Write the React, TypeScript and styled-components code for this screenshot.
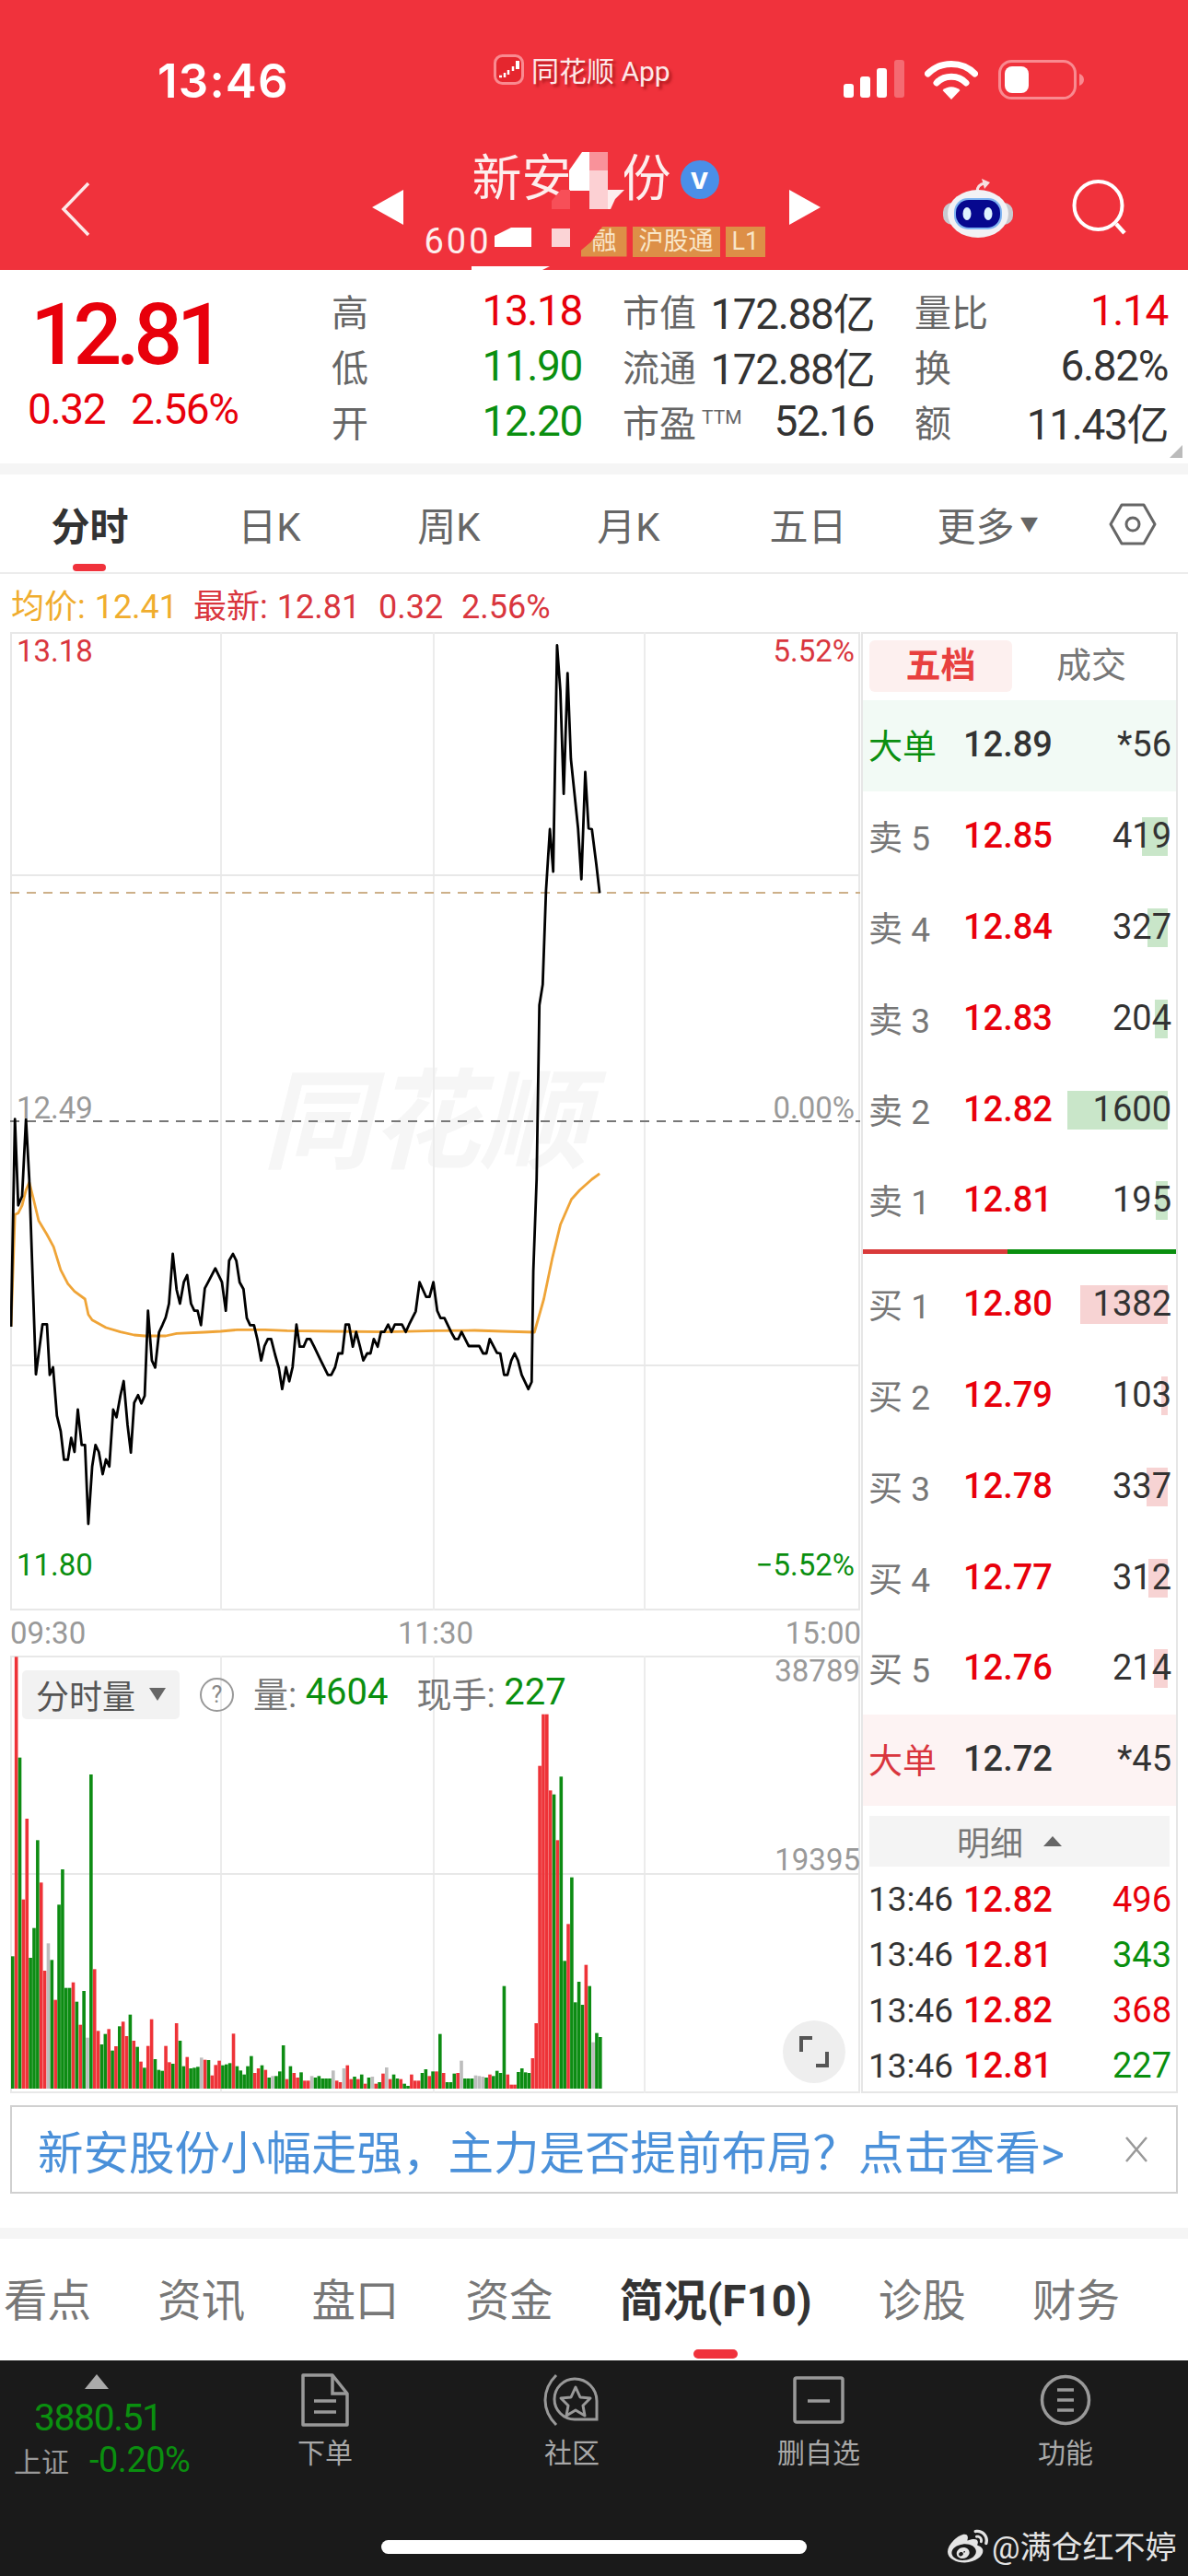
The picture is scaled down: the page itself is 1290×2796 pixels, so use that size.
import React from 'react'
import styled, { createGlobalStyle } from 'styled-components'
import { FaWeibo } from 'react-icons/fa'

const RED = '#e8000b'
const GREEN = '#0a8f0f'
const FONT = `Roboto, "Noto Sans CJK SC", sans-serif`

const GlobalStyle = createGlobalStyle`
  html, body { margin: 0; padding: 0; background: #fff; }
  body { font-family: ${FONT}; }
`

const Page = styled.div`
  width: 1290px;
  height: 2796px;
  overflow: hidden;
  display: flex;
  flex-direction: column;
  background: #fff;
`

/* ---------- red header ---------- */
const Header = styled.header`
  position: relative;
  height: 293px;
  flex: none;
  background: #f0323c;
  color: #fff;
`
const Mosaic = styled.svg`
  position: absolute;
  left: 0;
  top: 0;
  pointer-events: none;
`
const StatusBar = styled.div`
  height: 158px;
  box-sizing: border-box;
  padding: 52px 113px 0 171px;
  display: flex;
  align-items: flex-start;
`
const Clock = styled.div`
  width: 365px;
  font: 600 51px/72px Inter, sans-serif;
  letter-spacing: 1.2px;
`
const SourceApp = styled.div`
  display: flex;
  align-items: center;
  gap: 8px;
  margin-top: 3px;
  height: 40px;
  font-size: 30px;
  color: #fde8e8;
  text-shadow: 3px 3px 3px rgba(110, 0, 0, 0.5);
`
const StatusIcons = styled.div`
  margin-left: auto;
  display: flex;
  align-items: center;
  gap: 22px;
  height: 68px;
`
const NavBar = styled.div`
  display: grid;
  grid-template-columns: 404px 487px 1fr;
  height: 135px;
`
const BackSlot = styled.div`
  padding: 38px 0 0 64px;
`
const Switcher = styled.div`
  display: flex;
  justify-content: space-between;
`
const Arrow = styled.div<{ $dir: 'l' | 'r' }>`
  width: 0;
  height: 0;
  margin-top: 48px;
  border-top: 19px solid transparent;
  border-bottom: 19px solid transparent;
  ${({ $dir }) => ($dir === 'l' ? 'border-right: 34px solid #fff;' : 'border-left: 34px solid #fff;')}
`
const Stock = styled.div`
  width: 374px;
  display: flex;
  flex-direction: column;
`
const TitleRow = styled.div`
  display: flex;
  align-items: center;
  height: 72px;
  padding: 1px 0 0 52px;
  gap: 10px;
  font-size: 54px;
  line-height: 72px;
  color: #fdeeee;
`
const VBadge = styled.span`
  width: 42px;
  height: 42px;
  border-radius: 50%;
  background: #4a8fe8;
  color: #fff;
  font: 700 34px/38px "Liberation Sans", sans-serif;
  text-align: center;
`
const CodeRow = styled.div`
  display: flex;
  align-items: center;
  margin-top: 13px;
  height: 36px;
`
const Code = styled.span`
  width: 170px;
  font-size: 38px;
  line-height: 36px;
  letter-spacing: 3px;
  color: #fdeeee;
`
const Tags = styled.div`
  display: flex;
  gap: 6px;
`
const Tag = styled.span<{ $notched?: boolean }>`
  height: 33px;
  padding: 0 ${({ $notched }) => ($notched ? '11px 0 12px' : '7px')};
  background: #dd8f47;
  color: #f9e6c8;
  font-size: 27px;
  line-height: 32px;
  ${({ $notched }) => $notched && 'clip-path: polygon(48% 0, 100% 0, 100% 100%, 0 100%, 0 80%, 22% 52%);'}
`
const NavTools = styled.div`
  display: flex;
  padding: 34px 0 0 133px;
  gap: 62px;
  align-items: flex-start;
`

/* ---------- quote ---------- */
const Quote = styled.section`
  position: relative;
  height: 210px;
  flex: none;
  display: flex;
  box-sizing: border-box;
  padding-top: 14px;
`
const PriceBox = styled.div`
  width: 360px;
  flex: none;
  padding-left: 30px;
  box-sizing: border-box;
`
const BigPrice = styled.div`
  margin: 9px 0 0 3px;
  font: 500 93px/96px Roboto, sans-serif;
  letter-spacing: -6.4px;
  color: ${RED};
`
const Change = styled.div`
  margin-top: 8px;
  display: flex;
  gap: 28px;
  font-size: 46px;
  line-height: 48px;
  letter-spacing: -1.4px;
  color: ${RED};
`
const Stats = styled.div`
  display: grid;
  grid-template-columns: 272px 273px 275px;
  grid-auto-rows: 60px;
  column-gap: 44px;
`
const Stat = styled.div`
  display: flex;
  justify-content: space-between;
  align-items: center;
`
const StatLabel = styled.span`
  font-size: 40px;
  color: #666;
  & sup {
    font-size: 21px;
    vertical-align: 14px;
    line-height: 0;
    margin-left: 6px;
  }
`
const StatValue = styled.span<{ $c?: string }>`
  font-size: 46px;
  letter-spacing: -1.4px;
  color: ${({ $c }) => $c || '#333'};
`
const CornerMark = styled.div`
  position: absolute;
  right: 6px;
  bottom: 6px;
  width: 0;
  height: 0;
  border-left: 14px solid transparent;
  border-bottom: 14px solid #bbb;
`
const Band = styled.div<{ $h: number }>`
  height: ${({ $h }) => $h}px;
  flex: none;
  background: #f5f5f5;
`

/* ---------- period tabs ---------- */
const PeriodTabs = styled.nav`
  display: grid;
  grid-template-columns: repeat(6, 195px) 120px;
  height: 108px;
  flex: none;
  border-bottom: 2px solid #ececec;
  box-sizing: border-box;
`
const PeriodTab = styled.div<{ $on?: boolean }>`
  position: relative;
  display: flex;
  align-items: center;
  justify-content: center;
  padding-top: 1px;
  font-size: 42px;
  font-weight: ${({ $on }) => ($on ? 700 : 400)};
  color: ${({ $on }) => ($on ? '#333' : '#666')};
  ${({ $on }) =>
    $on &&
    `&::after {
      content: '';
      position: absolute;
      left: 79px;
      bottom: 1px;
      width: 36px;
      height: 8px;
      border-radius: 4px;
      background: #f0323c;
    }`}
`
const Caret = styled.span`
  margin-left: 6px;
  font-size: 20px;
  color: #666;
`

const InfoLine = styled.div`
  height: 63px;
  flex: none;
  padding-left: 12px;
  display: flex;
  align-items: center;
  font-size: 36px;
  word-spacing: 1px;
  white-space: pre;
`
const InfoPart = styled.span<{ $c: string }>`
  color: ${({ $c }) => $c};
  margin-right: 17px;
`

/* ---------- market ---------- */
const Market = styled.section`
  display: flex;
  height: 1586px;
  flex: none;
`
const ChartColumn = styled.div`
  width: 935px;
  flex: none;
  box-sizing: border-box;
  padding-left: 11px;
`
const Plot = styled.div<{ $h: number }>`
  position: relative;
  width: 923px;
  height: ${({ $h }) => $h}px;
`
const PlotSvg = styled.svg`
  display: block;
  position: absolute;
  left: 0;
  top: 0;
`
const AxisLabel = styled.span<{ $c: string; $side: 'l' | 'r'; $top: number; $edge?: number }>`
  position: absolute;
  ${({ $side, $edge }) => ($side === 'l' ? 'left: 7px;' : `right: ${$edge ?? 6}px;`)}
  top: ${({ $top }) => $top}px;
  font-size: 33px;
  line-height: 40px;
  color: ${({ $c }) => $c};
`
const Watermark = styled.span`
  position: absolute;
  left: 274px;
  top: 452px;
  font: italic 700 118px/140px "Noto Sans CJK SC", sans-serif;
  color: #f6f6f6;
`
const TimeAxis = styled.div`
  height: 49px;
  display: flex;
  justify-content: space-between;
  align-items: center;
  font-size: 33px;
  color: #999;
  padding-right: 0;
`
const VolumeHead = styled.div`
  position: absolute;
  left: 13px;
  top: 12px;
  display: flex;
  align-items: center;
  font-size: 38px;
`
const VolumeSelect = styled.div`
  width: 171px;
  height: 53px;
  box-sizing: border-box;
  padding-left: 15px;
  display: flex;
  align-items: center;
  gap: 15px;
  background: #f2f2f2;
  border-radius: 5px;
  font-size: 36px;
  color: #555;
`
const SmallCaret = styled.span`
  width: 0;
  height: 0;
  border-left: 9px solid transparent;
  border-right: 9px solid transparent;
  border-top: 14px solid #666;
`
const Help = styled.span`
  width: 33px;
  height: 33px;
  margin: 0 21px 0 22px;
  border: 2px solid #999;
  border-radius: 50%;
  text-align: center;
  font-size: 25px;
  line-height: 33px;
  color: #888;
`
const HeadLabel = styled.span`
  margin-bottom: 5px;
  color: #777;
  white-space: pre;
`
const HeadValue = styled.span`
  margin: 0 31px 5px 0;
  font-size: 40px;
  color: ${GREEN};
`
const Expand = styled.div`
  position: absolute;
  left: 839px;
  top: 396px;
  width: 68px;
  height: 68px;
  border-radius: 50%;
  background: #eeeeee;
  display: flex;
  align-items: center;
  justify-content: center;
`

/* ---------- order book ---------- */
const Book = styled.aside`
  width: 344px;
  flex: none;
  box-sizing: border-box;
  border: 2px solid #e6e6e6;
  display: flex;
  flex-direction: column;
`
const BookTabs = styled.div`
  height: 72px;
  flex: none;
  display: flex;
  padding: 7px 0 0 7px;
  box-sizing: border-box;
`
const BookTab = styled.div<{ $on?: boolean }>`
  width: 155px;
  height: 56px;
  border-radius: 6px;
  text-align: center;
  font-size: 38px;
  line-height: 54px;
  font-weight: ${({ $on }) => ($on ? 700 : 400)};
  color: ${({ $on }) => ($on ? '#e8403f' : '#777')};
  background: ${({ $on }) => ($on ? '#fdf0ef' : 'transparent')};
  & + & {
    width: 172px;
  }
`
const BookRow = styled.div<{ $bg?: string }>`
  height: 98.8px;
  flex: none;
  display: flex;
  align-items: center;
  padding: 0 5px 2px 6px;
  box-sizing: border-box;
  background: ${({ $bg }) => $bg || 'transparent'};
`
const RowLabel = styled.span<{ $c?: string }>`
  width: 103px;
  flex: none;
  font-size: 37px;
  color: ${({ $c }) => $c || '#777'};
  white-space: pre;
`
const RowPrice = styled.span<{ $c?: string }>`
  font-size: 38px;
  font-weight: 500;
  color: ${({ $c }) => $c || RED};
`
const RowQty = styled.span<{ $c?: string }>`
  position: relative;
  margin-left: auto;
  font-size: 38px;
  color: ${({ $c }) => $c || '#333'};
`
const DepthBar = styled.i<{ $buy?: boolean }>`
  position: absolute;
  right: 4px;
  top: 2px;
  height: 42px;
  background: ${({ $buy }) => ($buy ? '#f7d3d3' : '#c9e6c9')};
  z-index: 0;
`
const QtyText = styled.span`
  position: relative;
  z-index: 1;
`
const Split = styled.div`
  height: 5px;
  flex: none;
  margin: 3px 0 6px;
  display: flex;
  &::before {
    content: '';
    width: 157px;
    background: #d93a3a;
  }
  &::after {
    content: '';
    flex: 1;
    background: ${GREEN};
  }
`
const DetailHead = styled.div`
  height: 55px;
  flex: none;
  margin: 11px 7px 6px;
  background: #f4f4f4;
  display: flex;
  align-items: center;
  justify-content: center;
  gap: 22px;
  padding-right: 22px;
  font-size: 36px;
  color: #777;
`
const UpCaret = styled.span`
  width: 0;
  height: 0;
  border-left: 10px solid transparent;
  border-right: 10px solid transparent;
  border-bottom: 11px solid #666;
`
const TradeRow = styled.div`
  height: 60.2px;
  flex: none;
  display: flex;
  align-items: center;
  padding: 0 5px 0 6px;
`
const TradeTime = styled.span`
  width: 103px;
  flex: none;
  font-size: 37px;
  color: #333;
`

/* ---------- banner ---------- */
const Banner = styled.div`
  margin: 13px 11px 37px;
  height: 96px;
  flex: none;
  box-sizing: border-box;
  border: 2px solid #d0d0d0;
  display: flex;
  align-items: center;
  padding: 0 30px 0 28px;
  font-size: 49.5px;
  color: #4a90d9;
  white-space: nowrap;
`
const BannerClose = styled.svg`
  margin-left: auto;
`

/* ---------- section tabs ---------- */
const SectionTabs = styled.nav`
  height: 132px;
  flex: none;
  display: flex;
  align-items: center;
  gap: 72.2px;
  padding: 0 0 0 4px;
`
const SectionTab = styled.div<{ $on?: boolean }>`
  position: relative;
  margin-top: -6px;
  font-size: 47.5px;
  white-space: nowrap;
  font-weight: ${({ $on }) => ($on ? 700 : 400)};
  color: ${({ $on }) => ($on ? '#333' : '#777')};
  ${({ $on }) =>
    $on &&
    `&::after {
      content: '';
      position: absolute;
      left: 50%;
      bottom: -32px;
      width: 48px;
      height: 10px;
      margin-left: -24px;
      border-radius: 5px;
      background: #f0323c;
    }`}
`

/* ---------- bottom bar ---------- */
const BottomBar = styled.footer`
  position: relative;
  flex: 1;
  background: #1a1a1a;
  display: grid;
  grid-template-columns: 219px repeat(4, 268px);
  align-items: start;
`
const IndexBox = styled.div`
  position: relative;
  padding-left: 15px;
  padding-top: 15px;
`
const IndexUp = styled.div`
  width: 0;
  height: 0;
  margin-left: 77px;
  border-left: 13px solid transparent;
  border-right: 13px solid transparent;
  border-bottom: 16px solid #aaa;
`
const IndexValue = styled.div`
  margin: 7px 0 0 22px;
  font-size: 41px;
  line-height: 48px;
  letter-spacing: -1.5px;
  color: ${GREEN};
`
const IndexLine = styled.div`
  margin-top: 0;
  display: flex;
  align-items: center;
  gap: 22px;
  font-size: 30px;
  color: #999;
`
const IndexPct = styled.span`
  font-size: 38px;
  letter-spacing: -0.5px;
  color: ${GREEN};
`
const ToolItem = styled.div`
  display: flex;
  flex-direction: column;
  align-items: center;
  gap: 7px;
  padding-top: 14px;
  font-size: 30px;
  line-height: 44px;
  color: #a8a8a8;
`
const HomeBar = styled.div`
  position: absolute;
  left: 414px;
  top: 195px;
  width: 462px;
  height: 15px;
  border-radius: 8px;
  background: #fff;
`
const Credit = styled.div`
  position: absolute;
  left: 1029px;
  top: 168px;
  display: flex;
  align-items: center;
  gap: 4px;
  font-size: 34px;
  line-height: 70px;
  color: #e4e4e4;
  white-space: nowrap;
`

/* ---------- data ---------- */
const X = 1.668
const z3 = (p: number[][]) => p.map(([x, y]) => [x / X, 1280 + y / 3])
const z2 = (p: number[][]) => p.map(([x, y]) => [x / X, 640 + y / 2.45])
const toPts = (p: number[][]) => p.map(([x, y]) => `${x.toFixed(1)},${y.toFixed(1)}`).join(' ')

const pricePts = [
  ...z3([[20, 480]]),
  ...z2([[27, 1408]]),
  ...z3([[33, 85], [40, 55]]),
  ...z2([[47, 1408]]),
  ...z3([
    [53, 0], [65, 635], [77, 472], [85, 472], [90, 637], [96, 612], [103, 770], [110, 820], [116, 913], [123, 913],
    [129, 842], [135, 888], [141, 750], [148, 865], [154, 865], [160, 1122], [167, 935], [173, 865], [179, 888],
    [186, 960], [192, 912], [198, 935], [205, 750], [211, 775], [218, 705], [224, 657], [231, 800], [237, 890],
    [243, 728], [250, 703], [256, 730], [262, 705], [268, 428], [275, 590], [281, 613], [288, 498], [294, 475],
    [300, 450], [306, 405], [313, 243], [320, 360], [326, 405], [333, 335], [339, 312], [346, 405], [352, 428],
    [358, 428], [364, 475], [371, 355], [377, 335], [390, 290], [402, 335], [409, 428], [415, 265], [422, 243],
    [428, 265], [434, 335], [441, 358], [447, 452], [453, 475], [460, 475], [466, 520], [473, 590], [479, 543],
    [485, 520], [491, 520], [498, 570], [505, 615], [511, 683], [518, 612], [524, 658], [530, 612], [537, 473],
    [543, 545], [550, 545], [556, 520], [562, 520], [569, 545], [581, 590], [594, 637], [600, 637], [607, 612],
    [613, 567], [620, 567], [626, 473], [632, 473], [639, 545], [645, 497], [652, 545], [658, 590], [665, 567],
    [671, 567], [677, 520], [684, 545], [690, 497], [696, 497], [703, 473], [709, 497], [715, 473], [728, 473],
    [735, 497], [741, 473], [753, 430], [760, 335], [772, 383], [778, 383], [785, 335], [792, 428], [798, 452],
    [805, 452], [817, 497], [824, 520], [830, 520], [836, 497], [849, 543], [868, 543], [875, 567], [881, 567],
    [887, 520], [900, 565], [906, 567], [913, 637], [919, 637], [926, 590], [932, 567], [938, 590], [945, 637],
    [957, 683], [963, 660], [966, 300],
  ]),
  ...z2([
    [972, 1568], [977, 1105], [983, 1050], [989, 800], [996, 637], [1002, 750], [1009, 148], [1015, 270], [1021, 543],
    [1028, 222], [1034, 450], [1047, 635], [1053, 770], [1060, 485], [1066, 635], [1072, 637], [1080, 730], [1086, 807],
  ]),
]

const avgPts = [
  ...z3([
    [20, 480], [27, 115], [33, 110], [40, 85], [47, 35], [53, 10], [60, 60], [70, 135], [85, 180], [97, 220],
    [110, 295], [123, 340], [135, 365], [154, 390], [160, 440], [167, 458], [192, 483], [218, 497], [243, 507],
    [262, 510], [300, 510], [320, 502], [370, 498], [400, 495], [430, 490], [480, 490], [520, 493], [600, 495],
    [700, 497], [790, 493], [860, 492], [910, 495], [968, 498], [985, 390], [1000, 260], [1015, 148], [1035, 65],
    [1050, 35], [1072, 0],
  ]),
  ...z2([[1086, 1553]]),
]

const volumeData =
  'g1030 r55 g383 r845 r582 g1035 g938 g652 r790 r1077 a988 g1042 r1172 g862 g747 g1133 g1133 r1115 g1178 r1253 g1143 a1295 g438 r1072 r1273 g1317 g1283 r1267 g1337 r1323 g1258 r1243 r1290 g1220 r1305 g1325 r1373 g1393 r1322 r1235 g1365 g1400 g1403 r1322 r1375 g1380 r1248 g1305 g1388 r1358 g1395 g1393 g1390 a1360 r1367 g1368 r1418 r1384 r1370 g1385 g1382 g1378 r1282 g1388 g1402 g1415 g1388 g1355 r1410 r1395 g1385 r1400 g1425 a1420 g1420 g1405 g1320 r1430 g1388 r1410 r1425 g1408 r1435 r1435 a1420 g1425 g1420 g1428 g1428 g1428 a1402 r1435 r1440 a1395 r1385 r1430 g1422 r1430 g1415 r1445 g1425 a1422 r1445 g1440 r1412 a1392 r1430 g1415 g1428 r1430 g1445 g1452 r1415 r1435 r1435 g1410 g1398 r1420 g1405 r1405 g1283 r1410 g1440 g1440 g1412 r1410 a1370 g1428 g1428 g1428 a1418 a1420 a1422 g1425 r1415 g1420 g1403 g1410 g1127 r1415 r1448 r1448 g1407 g1395 g1408 g1410 r1362 r1248 r410 r242 r242 r490 g503 r652 g445 g1045 r925 g773 g1180 g1113 g1188 r1058 g1127 a1310 g1280 g1293'
    .split(' ')
    .map((v) => ({ c: v[0], top: 1780 + Number(v.slice(1)) / 3 }))
const barColor: Record<string, string> = { r: '#ee3338', g: '#0d8c13', a: '#bdbdbd' }

const sells = [
  { n: '5', p: '12.85', q: '419', w: 28 },
  { n: '4', p: '12.84', q: '327', w: 22 },
  { n: '3', p: '12.83', q: '204', w: 14 },
  { n: '2', p: '12.82', q: '1600', w: 109 },
  { n: '1', p: '12.81', q: '195', w: 13 },
]
const buys = [
  { n: '1', p: '12.80', q: '1382', w: 95 },
  { n: '2', p: '12.79', q: '103', w: 7 },
  { n: '3', p: '12.78', q: '337', w: 23 },
  { n: '4', p: '12.77', q: '312', w: 21 },
  { n: '5', p: '12.76', q: '214', w: 15 },
]
const trades = [
  { p: '12.82', q: '496', c: RED },
  { p: '12.81', q: '343', c: GREEN },
  { p: '12.82', q: '368', c: RED },
  { p: '12.81', q: '227', c: GREEN },
]
const stats: { label: React.ReactNode; value: string; c?: string }[] = [
  { label: '高', value: '13.18', c: RED },
  { label: '市值', value: '172.88亿' },
  { label: '量比', value: '1.14', c: RED },
  { label: '低', value: '11.90', c: GREEN },
  { label: '流通', value: '172.88亿' },
  { label: '换', value: '6.82%' },
  { label: '开', value: '12.20', c: GREEN },
  { label: <>市盈<sup>TTM</sup></>, value: '52.16' },
  { label: '额', value: '11.43亿' },
]

function PriceChart() {
  return (
    <PlotSvg width={923} height={1062} viewBox="11 686 923 1062">
      <rect x={12} y={687} width={921} height={1060} fill="none" stroke="#e8e8e8" strokeWidth={2} />
      {[240, 471, 700].map((x) => (
        <line key={x} x1={x} x2={x} y1={686} y2={1748} stroke="#ececec" strokeWidth={2} />
      ))}
      {[950, 1482].map((y) => (
        <line key={y} x1={11} x2={934} y1={y} y2={y} stroke="#e8e8e8" strokeWidth={2} />
      ))}
      <line x1={11} x2={934} y1={969} y2={969} stroke="#cdb089" strokeWidth={2} strokeDasharray="10 8" />
      <line x1={11} x2={934} y1={1217} y2={1217} stroke="#777" strokeWidth={2} strokeDasharray="10 8" />
      <polyline points={toPts(avgPts)} fill="none" stroke="#efa437" strokeWidth={2.8} strokeLinejoin="round" />
      <polyline points={toPts(pricePts)} fill="none" stroke="#000" strokeWidth={2.8} strokeLinejoin="round" />
    </PlotSvg>
  )
}

function VolumeChart() {
  return (
    <PlotSvg width={923} height={475} viewBox="11 1797 923 475">
      <rect x={12} y={1798} width={921} height={473} fill="none" stroke="#e8e8e8" strokeWidth={2} />
      {[240, 471, 700].map((x) => (
        <line key={x} x1={x} x2={x} y1={1797} y2={2272} stroke="#ececec" strokeWidth={2} />
      ))}
      <line x1={11} x2={934} y1={2034} y2={2034} stroke="#e8e8e8" strokeWidth={2} />
      {volumeData.map((b, i) => (
        <rect
          key={i}
          x={(23 + 6.45 * i) / X - 1.8}
          y={b.top}
          width={3.6}
          height={2267 - b.top}
          fill={barColor[b.c]}
        />
      ))}
    </PlotSvg>
  )
}

function BookLine({ label, n, p, q, w, buy }: { label: string; n: string; p: string; q: string; w: number; buy?: boolean }) {
  return (
    <BookRow>
      <RowLabel>{`${label} ${n}`}</RowLabel>
      <RowPrice>{p}</RowPrice>
      <RowQty>
        <DepthBar $buy={buy} style={{ width: w }} />
        <QtyText>{q}</QtyText>
      </RowQty>
    </BookRow>
  )
}

export default function App() {
  return (
    <Page>
      <GlobalStyle />
      <Header>
        <StatusBar>
          <Clock>13:46</Clock>
          <SourceApp>
            <svg width="33" height="33" viewBox="0 0 33 33">
              <rect x="1.5" y="1.5" width="30" height="30" rx="8" fill="#e5262e" stroke="#f98a90" strokeWidth="3" />
              <path d="M6 24h3M12 20v5M16 17v5M21 13v5" stroke="#fff" strokeWidth="2.5" />
              <rect x="24" y="7" width="4" height="9" fill="#fff" />
            </svg>
            同花顺 App
          </SourceApp>
          <StatusIcons>
            <svg width="66" height="42" viewBox="0 0 66 42">
              <rect x="0" y="26" width="11" height="15" rx="3" fill="#fff" />
              <rect x="18" y="18" width="11" height="23" rx="3" fill="#fff" />
              <rect x="36" y="9" width="11" height="32" rx="3" fill="#fff" />
              <rect x="55" y="0" width="11" height="41" rx="3" fill="#fff" fillOpacity="0.28" />
            </svg>
            <svg width="58" height="43" viewBox="0 0 58 43">
              <path d="M3.5 15C17 1 41 1 54.5 15" fill="none" stroke="#fff" strokeWidth="7" strokeLinecap="round" />
              <path d="M13 25C21 16 37 16 45 25" fill="none" stroke="#fff" strokeWidth="7" strokeLinecap="round" />
              <path d="M29 43L19.5 33C25 28 33 28 38.5 33Z" fill="#fff" />
            </svg>
            <svg width="93" height="43" viewBox="0 0 93 43">
              <rect x="1.5" y="1.5" width="82" height="40" rx="13" fill="none" stroke="#f98a90" strokeWidth="3" />
              <rect x="7" y="7" width="26" height="29" rx="8" fill="#fff" />
              <path d="M88 15c3 1 5 3.500 5 6.500s-2 5.500-5 6.500z" fill="#f98a90" />
            </svg>
          </StatusIcons>
        </StatusBar>
        <NavBar>
          <BackSlot>
            <svg width="36" height="62" viewBox="0 0 36 62">
              <path d="M32 3L5 31l27 28" fill="none" stroke="#fde8e8" strokeWidth="3.5" />
            </svg>
          </BackSlot>
          <Switcher>
            <Arrow $dir="l" />
            <Stock>
              <TitleRow>
                新安股份
                <VBadge>v</VBadge>
              </TitleRow>
              <CodeRow>
                <Code>600</Code>
                <Tags>
                  <Tag $notched>融</Tag>
                  <Tag>沪股通</Tag>
                  <Tag>L1</Tag>
                </Tags>
              </CodeRow>
            </Stock>
            <Arrow $dir="r" />
          </Switcher>
          <NavTools>
            <svg width="76" height="68" viewBox="0 0 76 68">
              <path d="M37 16c0-5 3-8 8-9" fill="none" stroke="#f6dfe0" strokeWidth="3" />
              <path d="M42 2l9 4-6 7z" fill="#f6dfe0" />
              <rect x="0" y="28" width="76" height="24" rx="10" fill="#c9c9cf" />
              <ellipse cx="38" cy="40" rx="33" ry="26" fill="#f2f2f5" />
              <rect x="12" y="23" width="52" height="34" rx="15" fill="#7fb4f2" />
              <rect x="14" y="25" width="48" height="30" rx="14" fill="#06088f" />
              <ellipse cx="26" cy="40" rx="4.500" ry="7" fill="#dff3ff" />
              <ellipse cx="49" cy="40" rx="4.500" ry="7" fill="#dff3ff" />
            </svg>
            <svg width="62" height="64" viewBox="0 0 62 64">
              <circle cx="30.500" cy="31" r="26" fill="none" stroke="#fff" strokeWidth="4" />
              <path d="M50 51l9 10" stroke="#fff" strokeWidth="4.500" />
            </svg>
          </NavTools>
        </NavBar>
        <Mosaic width={1290} height={293} viewBox="0 0 1290 293">
          <rect x="618" y="165" width="60" height="63" fill="#f0323c" />
          <path d="M632 165h8v42h-22v-22z" fill="#fff" />
          <rect x="640" y="165" width="20" height="20" fill="#f9929a" />
          <rect x="640" y="185" width="20" height="42" fill="#fcd0d3" />
          <path d="M660 206h18l-10 10-5 11h-3z" fill="#fdeeee" />
          <path d="M599 218l10-12h10v21h-20z" fill="#f74f58" />
          <path d="M537 256l18-9h22v21h-40z" fill="#fff" />
          <rect x="599" y="248" width="20" height="20" fill="#fbd4d6" />
          <path d="M512 289h85l-8 4h-77z" fill="#fff" />
        </Mosaic>
      </Header>

      <Quote>
        <PriceBox>
          <BigPrice>12.81</BigPrice>
          <Change>
            <span>0.32</span>
            <span>2.56%</span>
          </Change>
        </PriceBox>
        <Stats>
          {stats.map((s, i) => (
            <Stat key={i}>
              <StatLabel>{s.label}</StatLabel>
              <StatValue $c={s.c}>{s.value}</StatValue>
            </Stat>
          ))}
        </Stats>
        <CornerMark />
      </Quote>
      <Band $h={12} />

      <PeriodTabs>
        <PeriodTab $on>分时</PeriodTab>
        <PeriodTab>日K</PeriodTab>
        <PeriodTab>周K</PeriodTab>
        <PeriodTab>月K</PeriodTab>
        <PeriodTab>五日</PeriodTab>
        <PeriodTab>
          更多<Caret>▼</Caret>
        </PeriodTab>
        <PeriodTab>
          <svg width="52" height="46" viewBox="0 0 52 46">
            <path d="M14 2h24l12 21-12 21H14L2 23z" fill="none" stroke="#666" strokeWidth="3" strokeLinejoin="round" />
            <circle cx="26" cy="23" r="7" fill="none" stroke="#666" strokeWidth="3" />
          </svg>
        </PeriodTab>
      </PeriodTabs>

      <InfoLine>
        <InfoPart $c="#f0ad2e">均价: 12.41</InfoPart>
        <InfoPart $c="#d9363e">最新: 12.81  0.32  2.56%</InfoPart>
      </InfoLine>

      <Market>
        <ChartColumn>
          <Plot $h={1062}>
            <Watermark>同花顺</Watermark>
            <PriceChart />
            <AxisLabel $c="#d9363e" $side="l" $top={1}>13.18</AxisLabel>
            <AxisLabel $c="#d9363e" $side="r" $top={1}>5.52%</AxisLabel>
            <AxisLabel $c="#999" $side="l" $top={497}>12.49</AxisLabel>
            <AxisLabel $c="#999" $side="r" $top={497}>0.00%</AxisLabel>
            <AxisLabel $c={GREEN} $side="l" $top={993}>11.80</AxisLabel>
            <AxisLabel $c={GREEN} $side="r" $top={993}>−5.52%</AxisLabel>
          </Plot>
          <TimeAxis>
            <span>09:30</span>
            <span>11:30</span>
            <span>15:00</span>
          </TimeAxis>
          <Plot $h={475}>
            <VolumeChart />
            <VolumeHead>
              <VolumeSelect>
                分时量
                <SmallCaret />
              </VolumeSelect>
              <Help>?</Help>
              <HeadLabel>量: </HeadLabel>
              <HeadValue>4604</HeadValue>
              <HeadLabel>现手: </HeadLabel>
              <HeadValue>227</HeadValue>
            </VolumeHead>
            <AxisLabel $c="#999" $side="r" $edge={0} $top={-3}>38789</AxisLabel>
            <AxisLabel $c="#999" $side="r" $edge={0} $top={202}>19395</AxisLabel>
            <Expand>
              <svg width="34" height="36" viewBox="0 0 34 36">
                <path d="M15 3H3v15M19 33h12V18" fill="none" stroke="#555" strokeWidth="4" />
              </svg>
            </Expand>
          </Plot>
        </ChartColumn>

        <Book>
          <BookTabs>
            <BookTab $on>五档</BookTab>
            <BookTab>成交</BookTab>
          </BookTabs>
          <BookRow $bg="#f2faf5">
            <RowLabel $c={GREEN}>大单</RowLabel>
            <RowPrice $c="#333">12.89</RowPrice>
            <RowQty>*56</RowQty>
          </BookRow>
          {sells.map((r) => (
            <BookLine key={r.n} label="卖" {...r} />
          ))}
          <Split />
          {buys.map((r) => (
            <BookLine key={r.n} label="买" buy {...r} />
          ))}
          <BookRow $bg="#fdf3f3">
            <RowLabel $c="#d9363e">大单</RowLabel>
            <RowPrice $c="#333">12.72</RowPrice>
            <RowQty>*45</RowQty>
          </BookRow>
          <DetailHead>
            明细
            <UpCaret />
          </DetailHead>
          {trades.map((t, i) => (
            <TradeRow key={i}>
              <TradeTime>13:46</TradeTime>
              <RowPrice>{t.p}</RowPrice>
              <RowQty $c={t.c}>{t.q}</RowQty>
            </TradeRow>
          ))}
        </Book>
      </Market>

      <Banner>
        新安股份小幅走强，主力是否提前布局？点击查看&gt;
        <BannerClose width="26" height="30" viewBox="0 0 26 30">
          <path d="M2 2l22 26M24 2L2 28" stroke="#999" strokeWidth="2.5" />
        </BannerClose>
      </Banner>
      <Band $h={12} />

      <SectionTabs>
        <SectionTab>看点</SectionTab>
        <SectionTab>资讯</SectionTab>
        <SectionTab>盘口</SectionTab>
        <SectionTab>资金</SectionTab>
        <SectionTab $on>简况(F10)</SectionTab>
        <SectionTab>诊股</SectionTab>
        <SectionTab>财务</SectionTab>
      </SectionTabs>

      <BottomBar>
        <IndexBox>
          <IndexUp />
          <IndexValue>3880.51</IndexValue>
          <IndexLine>
            上证
            <IndexPct>-0.20%</IndexPct>
          </IndexLine>
        </IndexBox>
        <ToolItem>
          <svg width="52" height="58" viewBox="0 0 52 58" fill="none" stroke="#999" strokeWidth="3.5">
            <path d="M2 2h32l16 20v34H2z" strokeLinejoin="round" />
            <path d="M34 2v20h16M14 30h24M14 42h24" />
          </svg>
          下单
        </ToolItem>
        <ToolItem>
          <svg width="62" height="58" viewBox="0 0 62 58" fill="none" stroke="#999" strokeWidth="3">
            <path d="M14 2C-2 18-2 40 14 56" />
            <path d="M34 6a24 24 0 0 1 24 24v20h-24a22 22 0 0 1 0-44z" />
            <path d="M35 15l5 11 11 1-8 8 2 11-10-6-10 6 2-11-8-8 11-1z" strokeLinejoin="round" />
          </svg>
          社区
        </ToolItem>
        <ToolItem>
          <svg width="56" height="58" viewBox="0 0 56 58" fill="none" stroke="#999" strokeWidth="3.5">
            <rect x="2" y="5" width="52" height="48" rx="2" />
            <path d="M16 30h24" />
          </svg>
          删自选
        </ToolItem>
        <ToolItem>
          <svg width="56" height="58" viewBox="0 0 56 58" fill="none" stroke="#999" strokeWidth="3.5">
            <circle cx="28" cy="29" r="25.5" />
            <path d="M19 18h18M19 29h18M19 40h18" />
          </svg>
          功能
        </ToolItem>
        <HomeBar />
        <Credit>
          <FaWeibo size={44} />
          @满仓红不婷
        </Credit>
      </BottomBar>
    </Page>
  )
}
